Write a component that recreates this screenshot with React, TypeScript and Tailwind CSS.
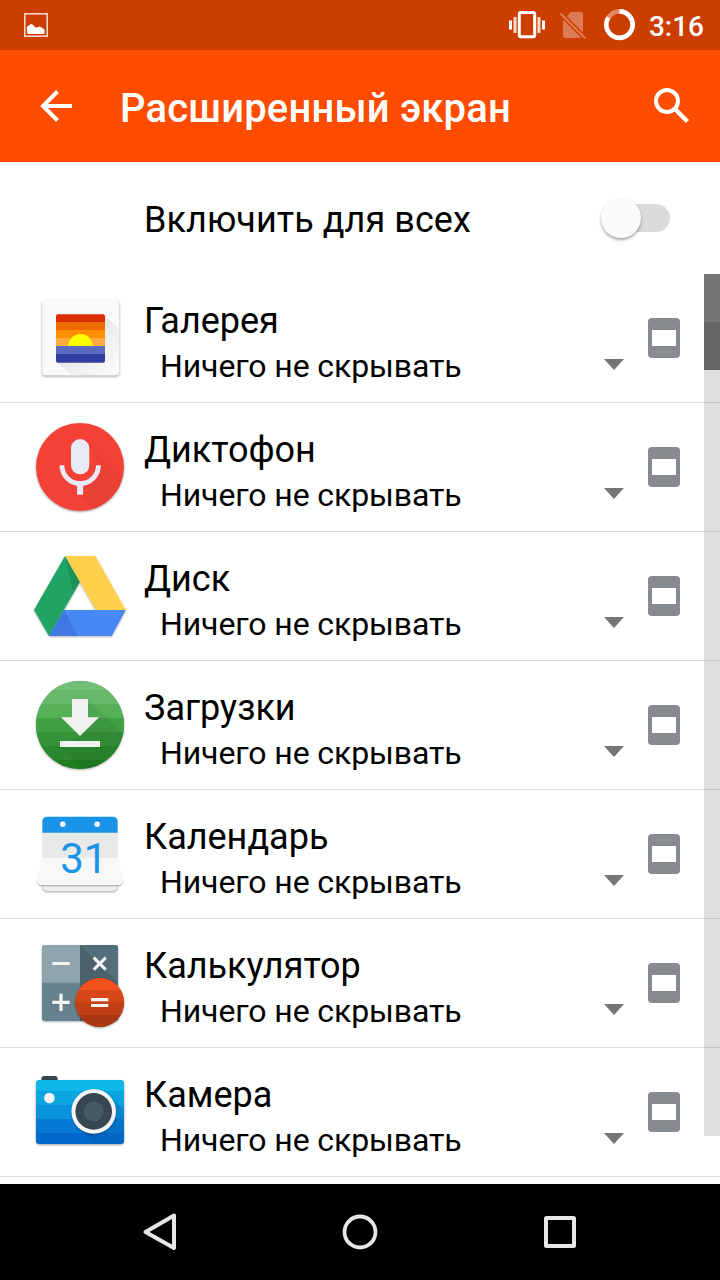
import type { ReactNode } from 'react';

function GalleryIcon() {
  return (
    <>
      <defs>
        <clipPath id="gallery-photo">
          <rect x="24" y="24.3" width="49" height="48.4" rx="2" />
        </clipPath>
        <linearGradient id="gallery-shade" x1="0" y1="0" x2="1" y2="1">
          <stop offset="0.4" stopColor="#e4e7ea" />
          <stop offset="0.9" stopColor="#fafafa" />
        </linearGradient>
      </defs>
      <rect x="10.3" y="10" width="77" height="75.5" rx="3.5" fill="#fafafa" className="drop-shadow-[0_1px_1px_rgba(0,0,0,0.4)]" />
      <path d="M72.5 25 87 39.5V82a3 3 0 0 1-3 3H39L25 72Z" fill="url(#gallery-shade)" />
      <g clipPath="url(#gallery-photo)">
        <rect x="24" y="24" width="49" height="8.3" fill="#dd2c00" />
        <rect x="24" y="32" width="49" height="8.3" fill="#ef6c00" />
        <rect x="24" y="40" width="49" height="8.3" fill="#ff8f00" />
        <rect x="24" y="48" width="49" height="8.3" fill="#ffab40" />
        <circle cx="48.5" cy="56.3" r="12.3" fill="#ffff00" />
        <rect x="24" y="56" width="49" height="8.3" fill="#5c6bc0" />
        <rect x="24" y="64" width="49" height="9" fill="#303f9f" />
      </g>
    </>
  );
}

function RecorderIcon() {
  return (
    <>
      <defs>
        <clipPath id="recorder-disc">
          <circle cx="48" cy="48" r="44" />
        </clipPath>
      </defs>
      <circle cx="48" cy="48" r="44" fill="#f44336" className="drop-shadow-[0_1px_1px_rgba(0,0,0,0.35)]" />
      <path d="m54 22 44 44-12 36H72L45 75l6-10 17-18Z" fill="#000" fillOpacity="0.035" clipPath="url(#recorder-disc)" />
      <rect x="39" y="20" width="18.3" height="35.3" rx="9.1" fill="#e8eaf6" />
      <path d="M29.9 46.3a18.3 18.3 0 0 0 36.6 0" fill="none" stroke="#e8eaf6" strokeWidth="4.8" />
      <rect x="45.1" y="64" width="6" height="11.7" fill="#e8eaf6" />
    </>
  );
}

function DriveIcon() {
  return (
    <g className="drop-shadow-[0_1px_1px_rgba(0,0,0,0.3)]">
      <path d="M33 8 48 33.7 17 88 2 62Z" fill="#1fa463" />
      <path d="M33 8h30.3L93.7 62H64Z" fill="#ffd04b" />
      <path d="M32 62h61.7L79.7 88H17Z" fill="#4688f4" />
      <path d="M33 8 48 33.7 41 45Z" fill="#000" fillOpacity="0.1" />
      <path d="M32 62 46 88H17Z" fill="#1a237e" fillOpacity="0.16" />
    </g>
  );
}

function DownloadsIcon() {
  return (
    <>
      <defs>
        <clipPath id="downloads-disc">
          <circle cx="48" cy="48" r="44" />
        </clipPath>
      </defs>
      <circle cx="48" cy="48" r="44" fill="#388e3c" className="drop-shadow-[0_1px_1px_rgba(0,0,0,0.35)]" />
      <g clipPath="url(#downloads-disc)">
        <rect y="0" width="96" height="14" fill="#74bf76" />
        <rect y="13" width="96" height="15" fill="#66b969" />
        <rect y="27" width="96" height="15" fill="#55b058" />
        <rect y="41" width="96" height="15" fill="#40a044" />
        <rect y="55" width="96" height="15" fill="#359239" />
        <rect y="69" width="96" height="15" fill="#2b882e" />
        <rect y="83" width="96" height="13" fill="#1f7d22" />
        <path d="m56 22 42 42-12 34H56L28 70l20-11Z" fill="#1b5e20" fillOpacity="0.13" />
      </g>
      <path d="M40 22h16v18.3h11L48 59 29 40.3h11Z" fill="#f1f1f1" />
      <rect x="28" y="64" width="40" height="6" fill="#f1f1f1" />
    </>
  );
}

function CalendarIcon() {
  return (
    <>
      <path d="M10.3 76h75.4v4a5 5 0 0 1-5 5H15.3a5 5 0 0 1-5-5Z" fill="#eee" className="drop-shadow-[0_1px_1px_rgba(0,0,0,0.35)]" />
      <rect x="10.3" y="26" width="75.4" height="27" fill="#e9e9e9" />
      <path d="M10.3 52h75.4l5 22.5a4 4 0 0 1-4 4.8H9.3a4 4 0 0 1-4-4.8Z" fill="#f8f8f8" className="drop-shadow-[0_1px_0.5px_rgba(0,0,0,0.3)]" />
      <path d="M10.3 26.7V15.3a4.5 4.5 0 0 1 4.5-4.5h66.4a4.5 4.5 0 0 1 4.5 4.5v11.4Z" fill="#1a94e8" />
      <circle cx="30.7" cy="18.3" r="2.7" fill="#fff" />
      <circle cx="65.2" cy="18.3" r="2.7" fill="#fff" />
      <text x="28.3 51.8" y="67.3" fontSize="42" fill="#1a94e8" className="font-[Roboto,sans-serif]">
        31
      </text>
    </>
  );
}

function CalculatorIcon() {
  return (
    <>
      <defs>
        <clipPath id="calculator-body">
          <rect x="10" y="10" width="76" height="75.7" rx="3" />
        </clipPath>
        <clipPath id="calculator-equals">
          <circle cx="67.7" cy="67.5" r="24.4" />
        </clipPath>
      </defs>
      <rect x="10" y="10" width="76" height="75.7" rx="3" fill="#607d8b" className="drop-shadow-[0_1px_1px_rgba(0,0,0,0.35)]" />
      <g clipPath="url(#calculator-body)">
        <rect x="10" y="10" width="38" height="38" fill="#90a4ae" />
        <rect x="10" y="47.7" width="38" height="39" fill="#66828f" />
        <rect x="48" y="10" width="38" height="76" fill="#546e7a" />
        <path d="M48 10 86 48v38H48Z" fill="#263238" fillOpacity="0.2" />
      </g>
      <circle cx="67.7" cy="67.5" r="24.4" fill="#bf360c" className="drop-shadow-[0_1px_1px_rgba(0,0,0,0.35)]" />
      <g clipPath="url(#calculator-equals)">
        <rect x="43" y="43" width="50" height="12.4" fill="#f4511e" />
        <rect x="43" y="55.3" width="50" height="12.4" fill="#d84718" />
        <rect x="43" y="67.6" width="50" height="12.4" fill="#c03f17" />
        <rect x="43" y="80" width="50" height="12.4" fill="#a93914" />
      </g>
      <path
        d="M20.3 28.5h17.4M20.3 67.4h17.4M29 58.7v17.4M61.7 22.7l12 12M73.7 22.700l-12 12M59 64.7h17.2M59 70.5h17.2"
        stroke="#f3f3f3"
        strokeWidth="3.2"
      />
    </>
  );
}

function CameraIcon() {
  return (
    <>
      <defs>
        <clipPath id="camera-body">
          <rect x="4" y="16" width="88" height="64" rx="4" />
        </clipPath>
      </defs>
      <path d="M9.3 18v-3a3 3 0 0 1 3-3h10.4a3 3 0 0 1 3 3v3Z" fill="#37474f" />
      <rect x="4" y="16" width="88" height="64" rx="4" fill="#0288d1" className="drop-shadow-[0_1px_1px_rgba(0,0,0,0.4)]" />
      <g clipPath="url(#camera-body)">
        <rect x="4" y="16" width="88" height="11.5" fill="#0db7e8" />
        <rect x="4" y="27" width="88" height="14.5" fill="#0aa5e1" />
        <rect x="4" y="41" width="88" height="14.5" fill="#0893dc" />
        <rect x="4" y="55" width="88" height="14.5" fill="#057bd4" />
        <rect x="4" y="69" width="88" height="11" fill="#0469cd" />
        <path d="m78 32 18 18v34H64L46 63Z" fill="#01579b" fillOpacity="0.22" />
      </g>
      <circle cx="17.4" cy="34" r="5.3" fill="#f5f5f5" />
      <circle cx="61.7" cy="47.4" r="22.3" fill="#f5f5f5" className="drop-shadow-[0_1px_1px_rgba(0,0,0,0.3)]" />
      <circle cx="61.7" cy="47.4" r="18.3" fill="#37474f" />
      <circle cx="61.7" cy="47.4" r="10" fill="#455a64" />
    </>
  );
}

const apps: { name: string; icon: ReactNode }[] = [
  { name: 'Галерея', icon: <GalleryIcon /> },
  { name: 'Диктофон', icon: <RecorderIcon /> },
  { name: 'Диск', icon: <DriveIcon /> },
  { name: 'Загрузки', icon: <DownloadsIcon /> },
  { name: 'Календарь', icon: <CalendarIcon /> },
  { name: 'Калькулятор', icon: <CalculatorIcon /> },
  { name: 'Камера', icon: <CameraIcon /> },
];

function StatusBar() {
  return (
    <div className="flex h-[50px] shrink-0 items-center justify-between bg-[#cc3d00] pl-6 pr-4 text-white">
      <svg width="24" height="24" viewBox="0 0 24 24">
        <rect x="0.8" y="0.8" width="22.4" height="22.4" fill="none" stroke="#fff" strokeOpacity="0.85" strokeWidth="1.5" />
        <path d="M3 19.5V14l1.500-1.5L7 11l1.500 0.500 3 3H13l2.500-1 2 1 3 2v3.500l-1 1H4Z" fill="#fff" />
      </svg>
      <div className="flex items-center">
        <svg width="36" height="28" viewBox="0 0 36 28">
          <rect x="10.3" y="1.5" width="15.4" height="24.3" rx="1.5" fill="none" stroke="#fff" strokeWidth="3" />
          <path d="M1.500 9.500v9M34.500 9.500v9" stroke="#fff" strokeWidth="3" />
          <path d="M6 6v16M30 6v16" stroke="#fff" strokeOpacity="0.8" strokeWidth="3" />
        </svg>
        <svg width="28" height="28" viewBox="0 0 28 28" className="ml-[14px]">
          <path d="M11.500 1H22a2 2 0 0 1 2 2v18.500L8 5.500ZM4 8.500 22 26.500 20.500 27H6a2 2 0 0 1-2-2Z" fill="#fff" fillOpacity="0.33" />
          <path d="M1.500 2.500 26.500 27.500" stroke="#fff" strokeOpacity="0.33" strokeWidth="2.2" />
        </svg>
        <svg width="32" height="32" viewBox="0 0 32 32" className="ml-4">
          <circle cx="16.5" cy="15.6" r="13.2" fill="none" stroke="#fff" strokeOpacity="0.4" strokeWidth="4.6" />
          <path d="M16.500 2.400a13.200 13.200 0 1 1-11.100 6" fill="none" stroke="#fff" strokeWidth="4.6" />
        </svg>
        <span className="ml-[14px] mt-[3px] text-[28px] font-medium leading-8">3:16</span>
      </div>
    </div>
  );
}

function Header() {
  return (
    <header className="flex h-28 shrink-0 items-center bg-[#ff4c00] pl-8 pr-6 text-white">
      <svg width="48" height="48" viewBox="0 0 48 48">
        <path d="M40 24H10M25.500 9.500 11 24l14.500 14.500" fill="none" stroke="#fff" strokeWidth="4" />
      </svg>
      <h1 className="ml-10 mt-1.5 flex-1 text-[40px] font-medium leading-[48px] tracking-[0.17px]">Расширенный экран</h1>
      <svg width="48" height="48" viewBox="0 0 48 48">
        <circle cx="19" cy="19" r="11" fill="none" stroke="#fff" strokeWidth="4" />
        <path d="m27 27 12.500 12.500" stroke="#fff" strokeWidth="4.5" />
      </svg>
    </header>
  );
}

function AppRow({ name, icon }: { name: string; icon: ReactNode }) {
  return (
    <li className="flex h-[129px] shrink-0 items-start border-b border-[#dedede] pl-8 pr-10">
      <svg width="96" height="96" viewBox="0 0 96 96" className="mt-4 overflow-visible">
        {icon}
      </svg>
      <div className="ml-4 flex-1 pt-[26px]">
        <div className="text-[36px] leading-[42px]">{name}</div>
        <div className="mt-[5px] flex items-center justify-between pl-4 pr-6 text-[32px] leading-[38px]">
          <span className="tracking-[-0.1px]">Ничего не скрывать</span>
          <svg width="20" height="11" viewBox="0 0 20 11" className="-mt-[3px]">
            <path d="M0 0h20L10 11Z" fill="#757575" />
          </svg>
        </div>
      </div>
      <svg width="32" height="40" viewBox="0 0 32 40" className="mt-11">
        <rect width="32" height="40" rx="4" fill="#868b8f" />
        <rect x="4" y="12" width="24" height="16" fill="#fff" />
      </svg>
    </li>
  );
}

function NavBar() {
  return (
    <nav className="flex h-24 shrink-0 items-center justify-center gap-[152px] bg-black">
      <svg width="48" height="48" viewBox="0 0 48 48">
        <path d="M38 7.500v32.500L9.500 24Z" fill="none" stroke="#e6e6e6" strokeWidth="4" strokeLinejoin="round" />
      </svg>
      <svg width="48" height="48" viewBox="0 0 48 48">
        <circle cx="24" cy="24" r="15.5" fill="none" stroke="#e6e6e6" strokeWidth="3.8" />
      </svg>
      <svg width="48" height="48" viewBox="0 0 48 48">
        <rect x="10" y="10" width="28" height="28" rx="0.5" fill="none" stroke="#e6e6e6" strokeWidth="4" strokeLinejoin="round" />
      </svg>
    </nav>
  );
}

export default function App() {
  return (
    <div className="flex h-[1280px] w-[720px] flex-col overflow-hidden bg-white font-[Roboto,sans-serif] text-black">
      <StatusBar />
      <Header />

      {/* Master switch */}
      <div className="flex h-28 shrink-0 items-center justify-between pl-36 pr-[50px]">
        <span className="mt-[3px] text-[36px] leading-[42px] tracking-[0.06px]">Включить для всех</span>
        <div className="flex h-7 w-[69px] items-center rounded-full bg-gradient-to-r from-transparent from-50% to-[#dadbdd] to-50%">
          <div className="size-10 rounded-full bg-[#fafafa] shadow-[0_2px_3px_rgba(0,0,0,0.35)]" />
        </div>
      </div>

      {/* App list */}
      <div className="relative flex-1 overflow-hidden">
        <ul>
          {apps.map((app) => (
            <AppRow key={app.name} name={app.name} icon={app.icon} />
          ))}
        </ul>
        <div className="absolute right-0 top-0 h-[862px] w-4 bg-black/[0.125]">
          <div className="h-12 bg-[#757575]" />
          <div className="h-12 bg-[#666666]" />
        </div>
      </div>

      <NavBar />
    </div>
  );
}
